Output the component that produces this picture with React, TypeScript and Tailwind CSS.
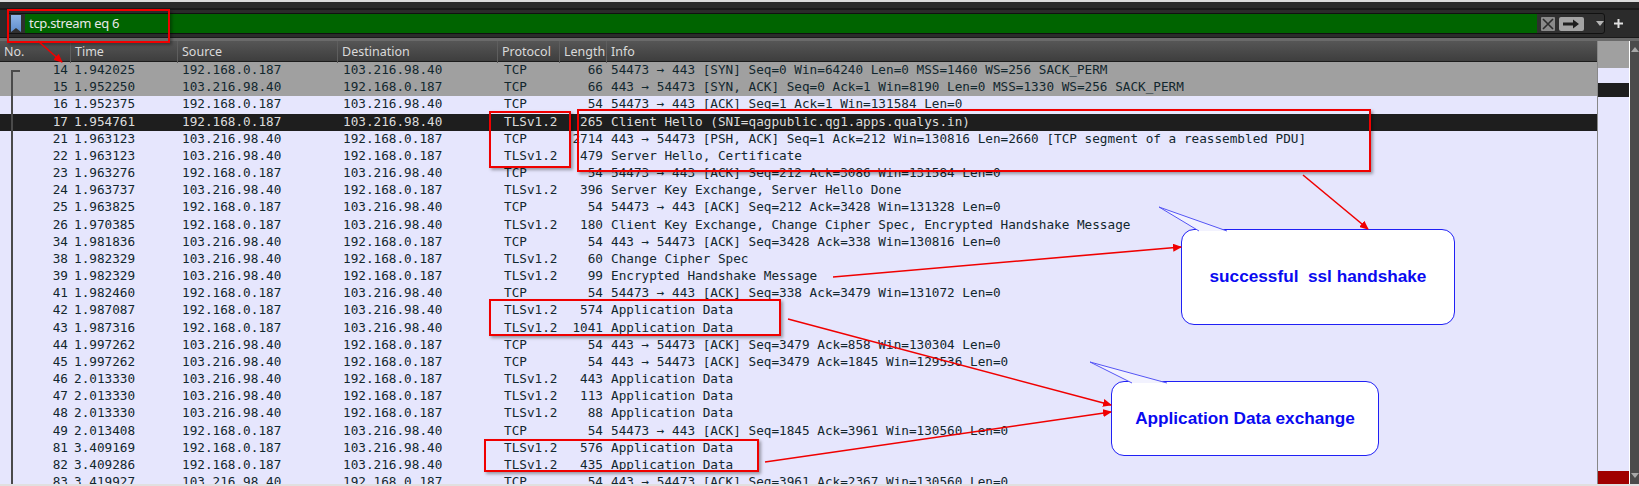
const FWD = ['192.168.0.187', '103.216.98.40'];
const REV = ['103.216.98.40', '192.168.0.187'];

type Packet = [number, string, string[], string, number, string];

const packets: Packet[] = [
  [14, '1.942025', FWD, 'TCP', 66, '54473 → 443 [SYN] Seq=0 Win=64240 Len=0 MSS=1460 WS=256 SACK_PERM'],
  [15, '1.952250', REV, 'TCP', 66, '443 → 54473 [SYN, ACK] Seq=0 Ack=1 Win=8190 Len=0 MSS=1330 WS=256 SACK_PERM'],
  [16, '1.952375', FWD, 'TCP', 54, '54473 → 443 [ACK] Seq=1 Ack=1 Win=131584 Len=0'],
  [17, '1.954761', FWD, 'TLSv1.2', 265, 'Client Hello (SNI=qagpublic.qg1.apps.qualys.in)'],
  [21, '1.963123', REV, 'TCP', 2714, '443 → 54473 [PSH, ACK] Seq=1 Ack=212 Win=130816 Len=2660 [TCP segment of a reassembled PDU]'],
  [22, '1.963123', REV, 'TLSv1.2', 479, 'Server Hello, Certificate'],
  [23, '1.963276', FWD, 'TCP', 54, '54473 → 443 [ACK] Seq=212 Ack=3086 Win=131584 Len=0'],
  [24, '1.963737', REV, 'TLSv1.2', 396, 'Server Key Exchange, Server Hello Done'],
  [25, '1.963825', FWD, 'TCP', 54, '54473 → 443 [ACK] Seq=212 Ack=3428 Win=131328 Len=0'],
  [26, '1.970385', FWD, 'TLSv1.2', 180, 'Client Key Exchange, Change Cipher Spec, Encrypted Handshake Message'],
  [34, '1.981836', REV, 'TCP', 54, '443 → 54473 [ACK] Seq=3428 Ack=338 Win=130816 Len=0'],
  [38, '1.982329', REV, 'TLSv1.2', 60, 'Change Cipher Spec'],
  [39, '1.982329', REV, 'TLSv1.2', 99, 'Encrypted Handshake Message'],
  [41, '1.982460', FWD, 'TCP', 54, '54473 → 443 [ACK] Seq=338 Ack=3479 Win=131072 Len=0'],
  [42, '1.987087', FWD, 'TLSv1.2', 574, 'Application Data'],
  [43, '1.987316', FWD, 'TLSv1.2', 1041, 'Application Data'],
  [44, '1.997262', REV, 'TCP', 54, '443 → 54473 [ACK] Seq=3479 Ack=858 Win=130304 Len=0'],
  [45, '1.997262', REV, 'TCP', 54, '443 → 54473 [ACK] Seq=3479 Ack=1845 Win=129536 Len=0'],
  [46, '2.013330', REV, 'TLSv1.2', 443, 'Application Data'],
  [47, '2.013330', REV, 'TLSv1.2', 113, 'Application Data'],
  [48, '2.013330', REV, 'TLSv1.2', 88, 'Application Data'],
  [49, '2.013408', FWD, 'TCP', 54, '54473 → 443 [ACK] Seq=1845 Ack=3961 Win=130560 Len=0'],
  [81, '3.409169', FWD, 'TLSv1.2', 576, 'Application Data'],
  [82, '3.409286', FWD, 'TLSv1.2', 435, 'Application Data'],
  [83, '3.419927', REV, 'TCP', 54, '443 → 54473 [ACK] Seq=3961 Ack=2367 Win=130560 Len=0'],
];

const headers = ['No.', 'Time', 'Source', 'Destination', 'Protocol', 'Length', 'Info'];

function rowColor(no: number) {
  if (no === 17) return 'bg-[#1e1e1e] text-[#dcdcdc]';
  if (no === 14 || no === 15) return 'bg-[#a0a0a0] text-[#12272e]';
  return 'bg-[#e6e6fd] text-[#12272e]';
}

function FilterBar() {
  return (
    <div className="flex h-[27px] items-start bg-[#2b2b2b] pl-[7px] pt-[3px]">
      <div className="flex h-[21px] w-[1598px] items-stretch rounded-[3px] border border-[#111] bg-[#2f2f2f]">
        <div className="flex w-[17px] items-center justify-center">
          <svg width="12" height="17" viewBox="0 0 12 17">
            <defs>
              <linearGradient id="ribbon" x1="0" y1="0" x2="0" y2="1">
                <stop offset="0" stopColor="#8fb4e6" />
                <stop offset="1" stopColor="#5d8ccc" />
              </linearGradient>
            </defs>
            <path d="M1 0h10v17l-5-4-5 4z" fill="url(#ribbon)" />
          </svg>
        </div>
        <div className="flex w-[1513px] items-center bg-[#006400] pl-[4px] font-['Noto_Sans',sans-serif] text-[13px] tracking-[-0.3px] text-[#e8e8e8]">
          tcp.stream eq 6
        </div>
        <div className="flex flex-1 items-center gap-[4px] pl-[4px]">
          <svg width="14" height="14" viewBox="0 0 14 14">
            <rect width="14" height="14" rx="1" fill="#8a8a8a" />
            <path d="M2 2l10 10M12 2L2 12" stroke="#2c2c2c" strokeWidth="1.6" />
          </svg>
          <svg width="25" height="14" viewBox="0 0 25 14">
            <rect width="25" height="14" rx="2" fill="#a4a4a4" />
            <path d="M4 5.5h10V2.5l6 4.5-6 4.500V8.500H4z" fill="#1f1f1f" />
          </svg>
          <svg className="ml-[8px]" width="8" height="5" viewBox="0 0 8 5">
            <path d="M0 0h8L4 5z" fill="#b5b5b5" />
          </svg>
        </div>
      </div>
      <svg className="ml-[9px] mt-[6px]" width="9" height="9" viewBox="0 0 9 9">
        <path d="M3.500 0h2v3.500H9v2H5.500V9h-2V5.500H0v-2h3.500z" fill="#e0e0e0" />
      </svg>
    </div>
  );
}

function PacketList() {
  return (
    <div className="relative h-full w-[1598px] overflow-hidden border-r border-[#888]">
      <div className="grid h-[21px] grid-cols-[71px_107px_160px_160px_62px_47px_1fr] border-b border-[#1c1c1c] bg-gradient-to-b from-[#565656] to-[#3e3e3e] font-['Noto_Sans',sans-serif] text-[12.5px] leading-[22px] text-[#dadada]">
        {headers.map((h) => (
          <div key={h} className="border-r border-[#5e5e5e] pl-[4px] last:border-r-0">{h}</div>
        ))}
      </div>
      <div className="font-['DejaVu_Sans_Mono',monospace] text-[12.7px] leading-[16px]">
        {packets.map(([no, time, [src, dst], proto, len, info]) => (
          <div
            key={no}
            className={`grid h-[17.18px] grid-cols-[71px_107px_160px_160px_62px_47px_1fr] whitespace-nowrap ${rowColor(no)}`}
          >
            <div className="pr-[3px] text-right">{no}</div>
            <div className="pl-[3px]">{time}</div>
            <div className="pl-[4px]">{src}</div>
            <div className="pl-[5px]">{dst}</div>
            <div className="pl-[6px]">{proto}</div>
            <div className="pr-[4px] text-right">{len}</div>
            <div className="pl-[4px]">{info}</div>
          </div>
        ))}
      </div>
      {/* conversation bracket */}
      <div className="absolute left-[11px] top-[29px] h-[500px] w-[9px] border-l-2 border-t-2 border-[#4a4a4a]" />
    </div>
  );
}

function Minimap() {
  return (
    <div className="flex h-full w-[32px] flex-col bg-[#e6e6fd] border-r border-white">
      <div className="h-[27px] bg-[#a0a0a0]" />
      <div className="h-[15px]" />
      <div className="h-[14px] bg-[#1e1e1e]" />
      <div className="flex-1" />
      <div className="h-[13px] bg-[#a00000]" />
    </div>
  );
}

function Scrollbar() {
  return (
    <div className="flex h-full flex-1 flex-col items-center justify-between bg-[#4b4b4b] py-[6px]">
      <svg width="8" height="5" viewBox="0 0 8 5"><path d="M4 0l4 5H0z" fill="#a8a8a8" /></svg>
      <svg width="8" height="5" viewBox="0 0 8 5"><path d="M0 0h8L4 5z" fill="#a8a8a8" /></svg>
    </div>
  );
}

function RedBox({ className }: { className: string }) {
  return <div className={`absolute border-2 border-[#f00000] shadow-[2px_2px_3px_rgba(0,0,0,0.35)] ${className}`} />;
}

function Callout({ className, children }: { className: string; children: string }) {
  return (
    <div className={`absolute flex items-center justify-center rounded-[13px] border-[1.5px] border-[#2020f5] bg-white font-['Liberation_Sans',sans-serif] text-[17.2px] font-bold whitespace-pre text-[#0a0af0] ${className}`}>
      {children}
    </div>
  );
}

function Annotations() {
  const arrows = [
    [38, 41, 62, 62],
    [1303, 175, 1368, 229],
    [833, 277, 1181, 247],
    [788, 319, 1111, 405],
    [765, 462, 1111, 412],
  ];
  return (
    <svg className="absolute left-0 top-0" width="1639" height="486" viewBox="0 0 1639 486">
      <defs>
        <marker id="head" markerWidth="9" markerHeight="8" refX="8" refY="4" orient="auto" markerUnits="userSpaceOnUse">
          <path d="M0 0l9 4-9 4z" fill="#f00000" />
        </marker>
      </defs>
      {arrows.map(([x1, y1, x2, y2]) => (
        <line key={`${x1}-${y1}`} x1={x1} y1={y1} x2={x2} y2={y2} stroke="#f00000" strokeWidth="1.6" markerEnd="url(#head)" />
      ))}
      <path d="M1199 231L1159 207L1227 231" fill="#f2f2fe" stroke="#5555f5" strokeWidth="1" />
      <path d="M1132 383L1090 362L1167 383" fill="#f2f2fe" stroke="#5555f5" strokeWidth="1" />
    </svg>
  );
}

export default function App() {
  return (
    <div className="relative h-[486px] w-[1639px] overflow-hidden bg-[#e0e0e0]">
      <div className="h-[2px] bg-[#dcdcdc]" />
      <div className="h-[6px] bg-[#2a2a2a]" />
      <div className="h-[2px] bg-[#1a1a1a]" />
      <FilterBar />
      <div className="h-[1px] bg-[#1a1a1a]" />
      <div className="h-[3px] bg-[#6a6a6a]" />
      <div className="flex h-[443px] bg-[#2b2b2b]">
        <PacketList />
        <Minimap />
        <Scrollbar />
      </div>

      <RedBox className="left-[7px] top-[9px] h-[34px] w-[163px]" />
      <RedBox className="left-[489px] top-[111px] h-[57px] w-[82px]" />
      <RedBox className="left-[577px] top-[109px] h-[63px] w-[794px]" />
      <RedBox className="left-[489px] top-[299px] h-[37px] w-[292px]" />
      <RedBox className="left-[484px] top-[439px] h-[33px] w-[275px]" />

      <Callout className="left-[1181px] top-[229px] h-[96px] w-[274px]">successful  ssl handshake</Callout>
      <Callout className="left-[1111px] top-[381px] h-[75px] w-[268px]">Application Data exchange</Callout>
      <Annotations />
    </div>
  );
}
